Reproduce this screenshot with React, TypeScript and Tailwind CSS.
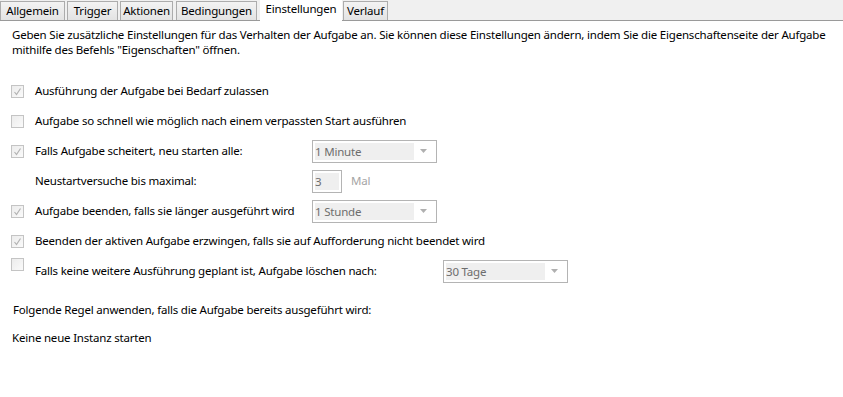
const font = { fontFamily: "'Segoe UI', 'Noto Sans', 'Open Sans', sans-serif" };

const tabs = [
  { name: 'Allgemein', w: 'w-[65px]', ml: 'ml-0' },
  { name: 'Trigger', w: 'w-[51px]', ml: 'ml-[2px]' },
  { name: 'Aktionen', w: 'w-[53px]', ml: 'ml-[2px]' },
  { name: 'Bedingungen', w: 'w-[81px]', ml: 'ml-[3px]' },
  { name: 'Einstellungen', w: 'w-[82px]', ml: 'ml-[3px]' },
  { name: 'Verlauf', w: 'w-[45px]', ml: 'ml-[1px]' },
];

function Check({ checked }: { checked: boolean }) {
  return (
    <span className="w-[13px] h-[13px] shrink-0 border border-[#c4c4c4] bg-gradient-to-br from-[#ececec] to-[#fafafa] flex items-center justify-center">
      {checked && (
        <svg width="9" height="9" viewBox="0 0 9 9">
          <path d="M1.5 5 L3.5 7.5 L7.5 1.5" fill="none" stroke="#b2b2b2" strokeWidth="1.2" />
        </svg>
      )}
    </span>
  );
}

function Combo({ value }: { value: string }) {
  return (
    <div className="w-[125px] h-[23px] border border-[#b4b4b4] bg-white flex items-center pl-[2px] pr-[4px]">
      <div className="flex-1 h-[17px] bg-[#efefef] text-[#6d6d6d] leading-[17px]">{value}</div>
      <span className="w-[18px] flex justify-center">
        <svg width="7" height="4" viewBox="0 0 7 4">
          <path d="M0 0 H7 L3.5 4 Z" fill="#b0b0b0" />
        </svg>
      </span>
    </div>
  );
}

function Row({
  checked,
  label,
  children,
  labelW = 'w-[277px]',
  raised = false,
}: {
  checked?: boolean | null;
  label: string;
  children?: React.ReactNode;
  labelW?: string;
  raised?: boolean;
}) {
  return (
    <div className="h-[30px] flex items-center">
      <div className={`w-[35px] shrink-0 pl-[11px] flex ${raised ? 'mb-[14px]' : ''}`}>
        {checked !== null && checked !== undefined && <Check checked={checked} />}
      </div>
      <span className={`${labelW} shrink-0 whitespace-nowrap`}>{label}</span>
      {children}
    </div>
  );
}

export default function App() {
  return (
    <div className="w-[843px] h-[397px] bg-white text-[11.5px] tracking-[-0.2px] text-black overflow-hidden" style={font}>
      {/* Tab strip */}
      <div className="h-[21px] bg-[#f0f0f0] border-b border-[#9a9a9a] flex items-end">
        {tabs.map((t) =>
          t.name === 'Einstellungen' ? (
            <div key={t.name} className={`${t.w} ${t.ml} h-[21px] -mb-px bg-white leading-[15px] pt-[1px] text-center`}>
              {t.name}
            </div>
          ) : (
            <div
              key={t.name}
              className={`${t.w} ${t.ml} h-[19px] border border-b-0 border-[#acacac] bg-gradient-to-b from-[#f3f3f3] to-[#e3e3e3] leading-[17px] text-center`}
            >
              {t.name}
            </div>
          )
        )}
      </div>

      <p className="pl-[12px] pt-[6px] leading-[15px] pr-[4px]">
        Geben Sie zusätzliche Einstellungen für das Verhalten der Aufgabe an. Sie können diese Einstellungen ändern, indem Sie die Eigenschaftenseite der Aufgabe mithilfe des Befehls "Eigenschaften" öffnen.
      </p>

      <div className="mt-[19px]">
        <Row checked label="Ausführung der Aufgabe bei Bedarf zulassen" />
        <Row checked={false} label="Aufgabe so schnell wie möglich nach einem verpassten Start ausführen" labelW="w-auto" />
        <Row checked label="Falls Aufgabe scheitert, neu starten alle:">
          <Combo value="1 Minute" />
        </Row>
        <Row checked={null} label="Neustartversuche bis maximal:">
          <div className="w-[30px] h-[23px] border border-[#b4b4b4] bg-white flex items-center px-[2px]">
            <div className="w-full h-[17px] bg-[#efefef] text-[#6d6d6d] leading-[17px]">3</div>
          </div>
          <span className="ml-[9px] text-[#a5a5a5]">Mal</span>
        </Row>
        <Row checked label="Aufgabe beenden, falls sie länger ausgeführt wird">
          <Combo value="1 Stunde" />
        </Row>
        <Row checked label="Beenden der aktiven Aufgabe erzwingen, falls sie auf Aufforderung nicht beendet wird" labelW="w-auto" />
        <Row raised checked={false} label="Falls keine weitere Ausführung geplant ist, Aufgabe löschen nach:" labelW="w-[408px]">
          <Combo value="30 Tage" />
        </Row>
      </div>

      <p className="pl-[13px] mt-[16px] leading-[15px]">Folgende Regel anwenden, falls die Aufgabe bereits ausgeführt wird:</p>
      <p className="pl-[12px] mt-[13px] leading-[15px]">Keine neue Instanz starten</p>
    </div>
  );
}
